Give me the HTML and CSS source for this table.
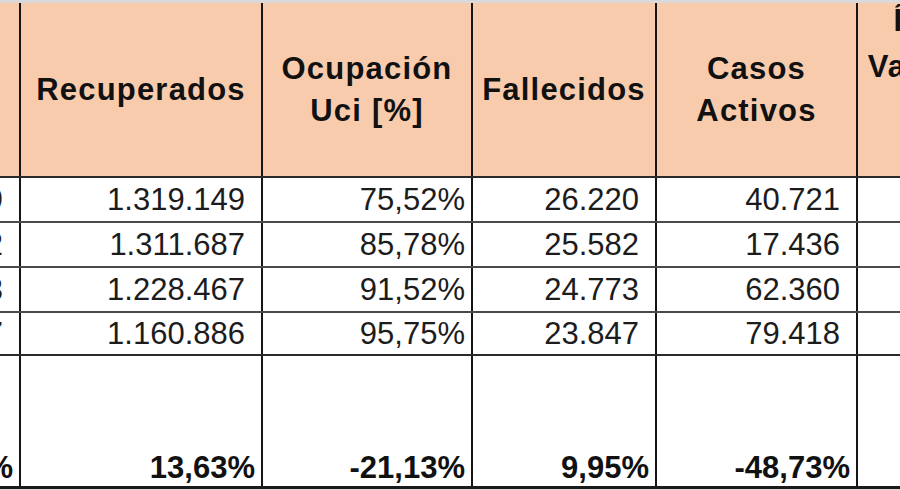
FILE: index.html
```html
<!DOCTYPE html>
<html lang="es">
<head>
<meta charset="utf-8">
<title>Hoja de cálculo</title>
<link rel="stylesheet" href="styles.css">
</head>
<body>
<div class="viewport">
  <table class="sheet">
    <colgroup>
      <col class="c0"><col class="c1"><col class="c2"><col class="c3"><col class="c4"><col class="c5">
    </colgroup>
    <thead>
      <tr class="head">
        <th></th>
        <th>Recuperados</th>
        <th>Ocupación<br>Uci [%]</th>
        <th>Fallecidos</th>
        <th>Casos<br>Activos</th>
        <th><div class="stack"><span>Índice</span><span>Variación</span><span>Total</span><span>[%]</span></div></th>
      </tr>
    </thead>
    <tbody>
      <tr class="row">
        <td class="num">1.386.089</td>
        <td class="num">1.319.149</td>
        <td class="pct">75,52%</td>
        <td class="num">26.220</td>
        <td class="num">40.721</td>
        <td></td>
      </tr>
      <tr class="row">
        <td class="num">1.354.702</td>
        <td class="num">1.311.687</td>
        <td class="pct">85,78%</td>
        <td class="num">25.582</td>
        <td class="num">17.436</td>
        <td></td>
      </tr>
      <tr class="row">
        <td class="num">1.315.603</td>
        <td class="num">1.228.467</td>
        <td class="pct">91,52%</td>
        <td class="num">24.773</td>
        <td class="num">62.360</td>
        <td></td>
      </tr>
      <tr class="row last">
        <td class="num">1.264.147</td>
        <td class="num">1.160.886</td>
        <td class="pct">95,75%</td>
        <td class="num">23.847</td>
        <td class="num">79.418</td>
        <td></td>
      </tr>
      <tr class="total">
        <td class="pct">9,62%</td>
        <td class="pct">13,63%</td>
        <td class="pct">-21,13%</td>
        <td class="pct">9,95%</td>
        <td class="pct">-48,73%</td>
        <td></td>
      </tr>
    </tbody>
  </table>
</div>
</body>
</html>
```

FILE: styles.css
```css
html, body {
  margin: 0;
  padding: 0;
  background: #d9d9d9;
}

.viewport {
  width: 900px;
  height: 490px;
  overflow: hidden;
  background: #d9d9d9;
  padding-top: 3px;
  box-sizing: border-box;
}

.sheet {
  border-collapse: collapse;
  table-layout: fixed;
  width: 1207px;
  margin-left: -180px;
  font-family: "Liberation Sans", Arial, sans-serif;
  color: #1c1c1c;
  background: #ffffff;
}

.c0 { width: 200px; }
.c1 { width: 242px; }
.c2 { width: 210px; }
.c3 { width: 184px; }
.c4 { width: 201px; }
.c5 { width: 170px; }

.sheet th,
.sheet td {
  border-right: 2px solid #151515;
  padding: 0;
  white-space: nowrap;
  overflow: hidden;
}

.head {
  height: 174px;
}

.head th {
  height: 172px;
  background: #f8cbad;
  font-size: 31px;
  font-weight: bold;
  letter-spacing: 1.2px;
  line-height: 42px;
  text-align: center;
  vertical-align: middle;
  border-bottom: 2px solid #2a2a2a;
  color: #111111;
}

.stack {
  height: 172px;
  overflow: hidden;
  display: flex;
  flex-direction: column;
  justify-content: center;
  align-items: center;
  line-height: 46px;
}

.stack span {
  flex: none;
}

.row {
  height: 45px;
}

.row td {
  font-size: 31px;
  border-bottom: 2px solid #4a4a4a;
  vertical-align: middle;
}

.row.last {
  height: 43px;
}

.row.last td {
  border-bottom: 2px solid #2a2a2a;
}

.num {
  text-align: right;
  padding-right: 16px !important;
}

.pct {
  text-align: right;
  padding-right: 6px !important;
}

.total {
  height: 132px;
}

.total td {
  font-size: 31px;
  font-weight: bold;
  vertical-align: bottom;
  border-bottom: 3px solid #1a1a1a;
  color: #111111;
}
```
